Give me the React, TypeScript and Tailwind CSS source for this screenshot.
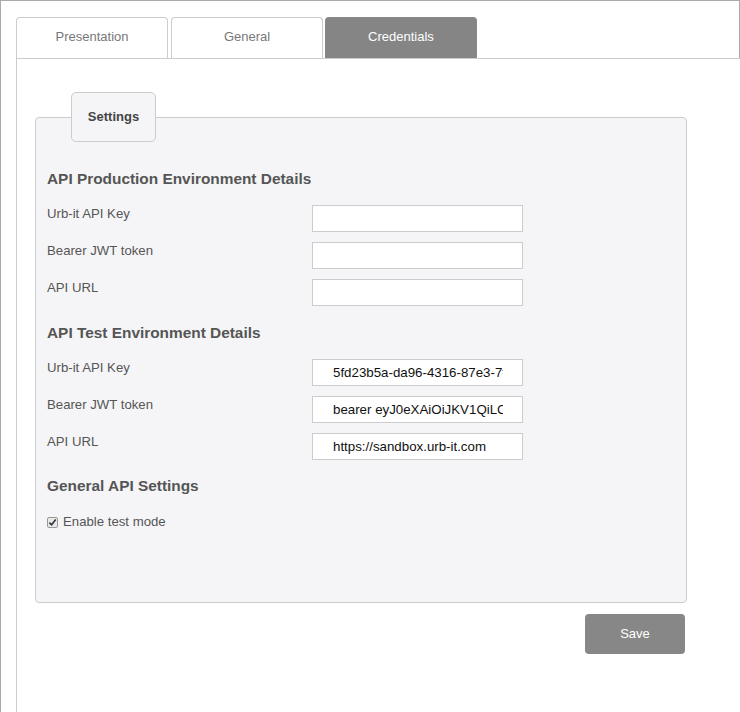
const production = [
  { label: "Urb-it API Key", value: "" },
  { label: "Bearer JWT token", value: "" },
  { label: "API URL", value: "" },
];

const test = [
  { label: "Urb-it API Key", value: "5fd23b5a-da96-4316-87e3-7f2c1a9b04de" },
  { label: "Bearer JWT token", value: "bearer eyJ0eXAiOiJKV1QiLCJhbGciOiJIUzI1NiJ9" },
  { label: "API URL", value: "https://sandbox.urb-it.com" },
];

function Field({ label, value }: { label: string; value: string }) {
  return (
    <div className="flex items-start">
      <label className="w-[265px] pt-[1px] text-[13.2px] leading-[16px] text-[#555]">{label}</label>
      <input
        readOnly
        value={value}
        className="h-[27px] w-[211px] border border-[#ccc] bg-white pl-[20px] pr-[19px] text-[13.3px] text-[#111] outline-none"
      />
    </div>
  );
}

function Section({ title, fields }: { title: string; fields: { label: string; value: string }[] }) {
  return (
    <div>
      <h3 className="text-[15.4px] font-bold leading-[20px] text-[#555]">{title}</h3>
      <div className="mt-4 flex flex-col gap-[10px]">
        {fields.map((f) => (
          <Field key={f.label} {...f} />
        ))}
      </div>
    </div>
  );
}

export default function App() {
  const tabs = ["Presentation", "General", "Credentials"];
  return (
    <div
      className="h-[712px] w-[740px] overflow-hidden border-l border-t border-[#aaa] bg-white"
      style={{ fontFamily: '"Liberation Sans", Arial, sans-serif' }}
    >
      <div className="flex h-[57px] items-end border-r border-[#aaa] pl-[15px]">
        <div className="flex gap-[3px]">
          {tabs.map((t) => (
            <div
              key={t}
              className={
                t === "Credentials"
                  ? "-ml-px flex h-[41px] w-[152px] items-center justify-center rounded-t-[4px] border border-b-0 border-[#888] bg-[#858585] pb-[2px] text-[13px] text-white"
                  : "flex h-[41px] w-[152px] items-center justify-center rounded-t-[4px] border border-b-0 border-[#ccc] bg-white pb-[2px] text-[13px] text-[#777]"
              }
            >
              {t}
            </div>
          ))}
        </div>
      </div>
      <div className="ml-[15px] h-full border-l border-t border-[#ccc] pl-[18px] pt-[58px]">
        <div className="relative w-[652px] rounded-[4px] border border-[#ccc] bg-[#f5f5f7] px-[11px] pb-[72px] pt-[51px]">
          <div className="absolute left-[35px] top-[-26px] flex h-[50px] w-[85px] items-center justify-center rounded-[5px] border border-[#ccc] bg-[#f5f5f7] text-[13px] font-bold text-[#444]">
            Settings
          </div>
          <div className="flex flex-col">
            <Section title="API Production Environment Details" fields={production} />
            <div className="mt-[17px]">
              <Section title="API Test Environment Details" fields={test} />
            </div>
            <div className="mt-[16px]">
              <h3 className="text-[15.4px] font-bold leading-[20px] text-[#555]">General API Settings</h3>
              <div className="mt-[18px] flex items-center gap-[5px] text-[13.2px] leading-[16px] text-[#555]">
                <span className="flex h-[11px] w-[11px] items-center justify-center rounded-[2px] border border-[#999] bg-[#e8e8e8]">
                  <svg viewBox="0 0 10 10" className="h-[9px] w-[9px]">
                    <path d="M1.5 5.2 L4 7.6 L8.6 1.8" fill="none" stroke="#333" strokeWidth="1.8" />
                  </svg>
                </span>
                Enable test mode
              </div>
            </div>
          </div>
        </div>
        <div className="flex w-[650px] justify-end pt-[11px]">
          <button className="h-[40px] w-[100px] rounded-[4px] bg-[#878787] text-[13px] text-white">Save</button>
        </div>
      </div>
    </div>
  );
}
